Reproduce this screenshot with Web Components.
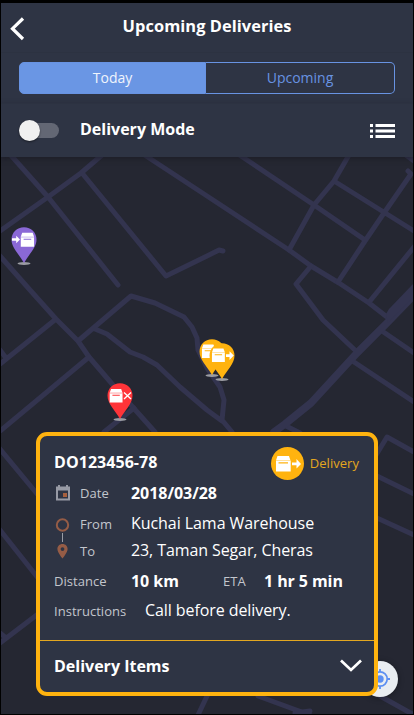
<!DOCTYPE html>
<html lang="en">
<head>
<meta charset="utf-8">
<title>Upcoming Deliveries</title>
<style>
html,body{margin:0;height:100%;background:#000}
body{font-family:"Open Sans","Noto Sans",sans-serif;color:#fff;overflow:hidden}
</style>
</head>
<body>
<delivery-app></delivery-app>
<script>
const define=(name,markup)=>customElements.define(name,class extends HTMLElement{
  constructor(){super();this.attachShadow({mode:'open'}).innerHTML=markup;}
});

/* A single text run, stretched by its --ls letter spacing */
define('ui-text',`<style>
:host{display:block;white-space:nowrap;font-size:var(--fs,16px);line-height:22px;letter-spacing:var(--ls,-.06px);color:var(--ink,inherit)}
:host([bold]){font-weight:700;letter-spacing:var(--ls,0)}
:host([dim]){color:#c3c6cd;--fs:13px;letter-spacing:.03px}
</style><slot></slot>`);

define('title-bar',`<style>
:host{display:flex;height:49px;align-items:center;justify-content:center;position:relative;box-sizing:border-box;padding-bottom:3px;background:#2e3444}
svg{position:absolute;left:7px;top:13px}
</style><svg width="18" height="26"><path d="M15 2.500 4.500 12.700l10.500 10.300" fill="none" stroke="#fff" stroke-width="3.200"/></svg><slot></slot>`);

define('tab-switch',`<style>
:host{display:flex;height:51px;box-sizing:border-box;padding:10px 18px;background:#2e3444;box-shadow:inset 0 1px #2c3241}
.t{display:flex;align-items:center;justify-content:center;height:32px;box-sizing:border-box;border:1px solid #6893e2;color:#6893e2;padding-bottom:1px}
.a{width:187px;background:#6a96e4;color:#f0f4fc;border-radius:5px 0 0 5px}
.b{flex:1;border-radius:0 5px 5px 0;border-left:0}
</style><div class="t a"><slot name="active"></slot></div><div class="t b"><slot name="other"></slot></div>`);

define('mode-bar',`<style>
:host{display:flex;height:54px;box-sizing:border-box;align-items:center;padding:0 18px;background:#2e3444;box-shadow:inset 0 1px #2c3241,0 2px 5px #17172299;position:relative}
.sw{width:40px;height:15px;border-radius:8px;background:#636774;display:flex;align-items:center}
.k{width:21px;height:21px;border-radius:50%;background:#f0f0f0;box-shadow:0 1px 2px #0007}
slot{display:block;margin-left:21px;flex:1;padding-bottom:2px}
svg{margin-top:1px}
</style><div class="sw"><div class="k"></div></div><slot></slot>
<svg width="25" height="16"><path d="M0 2.500h3M5.500 2.500H25M0 8h3M5.500 8H25M0 13.500h3M5.500 13.500H25" stroke="#fff" stroke-width="2.800"/></svg>`);

define('road-map',`<style>:host{display:block;position:absolute;inset:0;background:#252732}</style>
<svg width="414" height="715" viewBox="0 0 414 715" fill="none" stroke="#33344f" stroke-width="5" stroke-linejoin="round" stroke-linecap="round">
<path d="M8 152 48 197 118 285M0 231 48 197 81 173 102 155M82 173 166 276 207 256 219 250 223 251"/>
<path d="M140 152 207 196 289 250 311 266 339 283 369 303 387 317M0 256 30 290 56 319 78 341 89 357 113 385 155 432M56 319 0 364M0 350 6 358"/>
<path d="M78 341 131 296 155 303 184 317 192 327 197 338 198 350 207 368 220 387 224 400 222 420 232 432M95 329 107 334 130 352 143 357 157 365 180 387 207 410 222 421M89 357 0 431M134 408 104 432"/>
<path d="M238 154 314 205 365 240M349 155 334 181 314 205 289 250M334 181 414 231M408 171 411 174 384 213 365 241 338 282M414 247 370 301M311 266 296 284 323 320 357 352M382 331 414 353M354 362 414 402M284 425 300 433M403 153 414 161"/>
<path d="M370 465 387 437 414 452M377 476 414 494M377 518 414 535M0 449 38 495M0 530 38 578M0 643 38 614M0 633 6 638"/>
<path d="M198 715 208 694M258 696 310 715M295 713 310 711M380 696 414 715"/>
<path stroke-width="7.500" d="M414 295 388 322 357 353 311 403 285 424 274 432"/>
<path fill="#33344f" stroke="none" d="M414 283 389 309 386 314 388 323 414 296z"/>
</svg>`);

const box=`<path d="M2 0h11l1.500 4.200H.5z"/><path opacity=".65" d="M.5 4h14v1.200H.5z"/><path fill-rule="evenodd" d="M.5 5h14v9.800H.5zM3.500 6.200v1.200h8V6.200z"/>`;
const marks={
  'in':`<g transform="translate(9.300 5.800) scale(.95)">${box}</g><path d="M1 11.300h4.200V8.800L9 12.500l-3.800 3.700v-2.500H1z"/>`,
  out:`<g transform="translate(2.500 5.500) scale(.92)">${box}</g><path d="M17 11.300h3.500V8.300L24.800 12.600l-4.300 4.300v-2.800H17z"/>`,
  fail:`<g transform="translate(2.200 6) scale(.92)">${box}</g><path d="m17 9.500 7 6.500m0-6.500-7 6.500" stroke="#fff" stroke-width="1.300"/>`
};
customElements.define('map-pin',class extends HTMLElement{
  connectedCallback(){
    this.attachShadow({mode:'open'}).innerHTML=`<style>:host{display:block;position:absolute;color:var(--pin)}svg{display:block}</style>
<svg width="26" height="39" fill="#fff"><ellipse cx="13" cy="36.500" rx="6.500" ry="1.500" fill="#9b9ca2"/><path fill="currentColor" d="M13 .2C20 .2 25.500 5.500 25.500 12.500 25.500 20.500 18.500 26.500 13 36 7.500 26.500 .5 20.500 .5 12.500 .5 5.500 6 .2 13 .2z"/>${marks[this.getAttribute('kind')]}</svg>`;
  }
});

define('locate-button',`<style>:host{position:absolute;display:block;width:36px;height:36px;border-radius:50%;background:#e9edf1;box-shadow:0 1px 6px #0005}</style>
<svg width="36" height="36" fill="none" stroke="#5c8ff2"><circle cx="18" cy="18" r="3.700" fill="#5c8ff2" stroke="none"/><circle cx="18" cy="18" r="7.200" stroke-width="1.700"/><path stroke-width="1.800" d="M18 8v3M18 25v3M8 18h3M25 18h3"/></svg>`);

define('delivery-badge',`<style>:host{display:flex;align-items:center;gap:6px;color:#e3a720;margin-top:3px}slot{display:block;padding-bottom:1px}</style>
<svg width="33" height="33" fill="#fff"><circle cx="16.500" cy="16.500" r="16.500" fill="#ffb30f"/><g transform="translate(4.500 9)"><path d="M2 0h11.500l1.300 4H.6z"/><path opacity=".6" d="M.5 4h14.700v1H.5z"/><path fill-rule="evenodd" d="M.5 5h14.700v10.500H.5zM3 6.200v1.200h9.500V6.200z"/></g><path d="M21 15.500h4.500V12l4.500 4.900-4.500 4.700v-3.400H21z"/></svg><slot></slot>`);

define('detail-row',`<style>
:host{display:grid;grid-template-columns:var(--cols);align-items:center;height:var(--h,26px)}
</style><slot></slot>`);

define('calendar-icon',`<style>:host{display:block}svg{display:block}</style>
<svg width="18" height="16"><path fill="#979aa5" fill-rule="evenodd" d="M2 1.500h2V0h2v1.500h6V0h2v1.500h2V15.500H2zM4 5.500V13.500H14V5.500z"/><path fill="#a6603f" d="M9 8h4v4H9z"/></svg>`);
define('route-icon',`<style>:host{display:block;height:42px;margin-top:11px}svg{display:block}</style>
<svg width="18" height="42"><circle cx="8.500" cy="8" r="5.700" fill="none" stroke="#955c46" stroke-width="2"/><path d="M8.500 16v9" stroke="#9b9da5"/><path fill="#955c46" fill-rule="evenodd" d="M8.500 27c3.100 0 5.100 2.300 5.100 5.100 0 3.600-5.100 9.400-5.100 9.400s-5.100-5.800-5.100-9.400c0-2.800 2-5.100 5.100-5.100zm0 3.200a1.900 1.900 0 1 0 0 3.800 1.900 1.900 0 0 0 0-3.800z"/></svg>`);

define('delivery-card',`<style>
:host{display:flex;flex-direction:column;position:absolute;box-sizing:border-box;border:4px solid #ffb30f;border-radius:11px;background:#2e3444;overflow:hidden}
.body{height:204px;padding:8px 15px 0 14px;box-sizing:border-box}
.top{display:flex;justify-content:space-between;align-items:center;height:36px}
.top slot{display:block}
.foot{border-top:1px solid #e3a720;flex:1;display:flex;justify-content:space-between;align-items:center;padding:0 12px 1px 14px}
.foot svg{margin-top:-2px}
</style><div class="body"><div class="top"><slot name="id"></slot><slot name="badge"></slot></div><slot></slot></div>
<div class="foot"><slot name="foot"></slot><svg width="22" height="13"><path d="M1 1.500 11 11 21 1.500" fill="none" stroke="#fff" stroke-width="2.700"/></svg></div>`);

define('delivery-app',`<style>
:host{display:block;position:relative;width:412px;height:711px;margin:3px 1px 1px;overflow:hidden}
.map{position:absolute;left:-1px;top:-3px;width:414px;height:715px}
header{position:relative}
.route{display:grid;grid-template-columns:26px 1fr;height:53px}
</style>
<div class="map"><road-map></road-map>
<map-pin kind="in" style="--pin:#8a68d6;left:11.490px;top:227px"></map-pin>
<map-pin kind="out" style="--pin:#ffb30f;left:199px;top:339px"></map-pin>
<map-pin kind="out" style="--pin:#ffb30f;left:209px;top:343px"></map-pin>
<map-pin kind="fail" style="--pin:#ff3439;left:107px;top:383px"></map-pin>
<locate-button style="left:362px;top:661px"></locate-button>
<delivery-card style="left:36px;top:432px;width:342px;height:264px">
<ui-text slot="id" bold style="--ls:.05px">DO123456-78</ui-text>
<delivery-badge slot="badge"><ui-text style="--fs:13px;--ls:.04px">Delivery</ui-text></delivery-badge>
<detail-row style="--cols:26px 51px 1fr;--h:26px"><calendar-icon></calendar-icon><ui-text dim>Date</ui-text><ui-text bold style="--ls:-.05px">2018/03/28</ui-text></detail-row>
<div class="route"><route-icon></route-icon><div>
<detail-row style="--cols:51px 1fr;--h:34px"><ui-text dim style="margin-top:2px">From</ui-text><ui-text>Kuchai Lama Warehouse</ui-text></detail-row>
<detail-row style="--cols:51px 1fr;--h:18px"><ui-text dim>To</ui-text><ui-text style="--ls:-.1px;margin-top:-2px">23, Taman Segar, Cheras</ui-text></detail-row></div></div>
<detail-row style="--cols:77px 92px 41px 1fr;--h:43px"><ui-text dim>Distance</ui-text><ui-text bold style="--ls:-.05px">10 km</ui-text><ui-text dim>ETA</ui-text><ui-text bold style="--ls:-.08px">1 hr 5 min</ui-text></detail-row>
<detail-row style="--cols:91px 1fr;--h:18px"><ui-text dim style="margin-top:-2px">Instructions</ui-text><ui-text style="--ls:-.08px;margin-top:-4px">Call before delivery.</ui-text></detail-row>
<ui-text slot="foot" bold>Delivery Items</ui-text>
</delivery-card></div>
<header>
<title-bar><ui-text bold style="--fs:16.400px;--ls:.05px">Upcoming Deliveries</ui-text></title-bar>
<tab-switch><ui-text slot="active" style="--fs:14px;--ls:0px">Today</ui-text><ui-text slot="other" style="--fs:14px;--ls:0px">Upcoming</ui-text></tab-switch>
<mode-bar><ui-text bold>Delivery Mode</ui-text></mode-bar>
</header>`);
</script>
</body>
</html>
